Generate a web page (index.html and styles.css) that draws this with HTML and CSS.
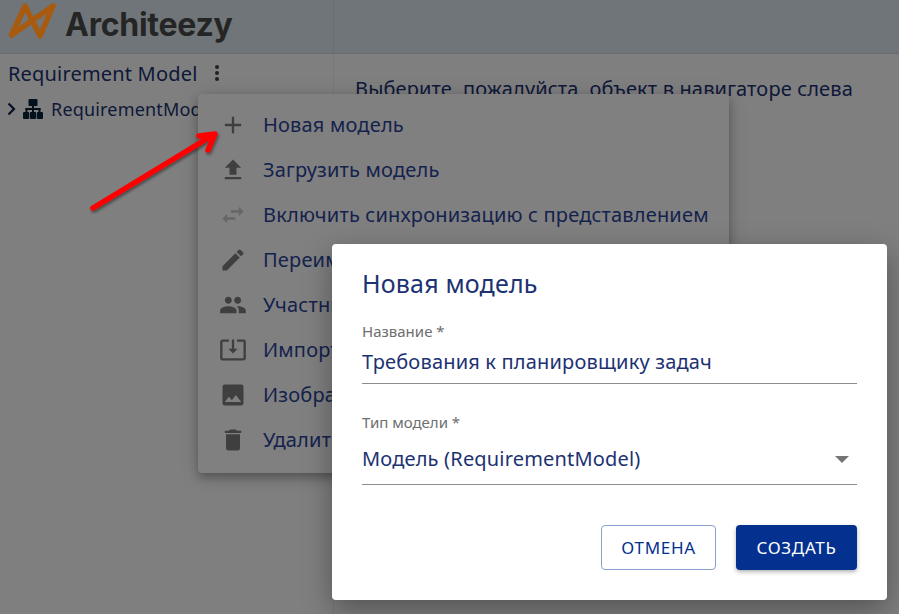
FILE: index.html
```html
<!DOCTYPE html>
<html lang="ru">
<head>
<meta charset="utf-8">
<title>Architeezy</title>
<link rel="stylesheet" href="styles.css">
</head>
<body>
<div class="app">
  <header class="topbar">
    <div class="brand">
      <svg class="logo" width="48" height="40" viewBox="0 0 48 40"><path d="M3.500 34 L17 5 L32 35 L45 5 Z" fill="none" stroke="#a85a0e" stroke-width="5.500" stroke-linejoin="round"/></svg>
      <span class="brand-name">Architeezy</span>
    </div>
    <div class="topbar-rest"></div>
  </header>
  <div class="content">
    <aside class="sidebar">
      <div class="sidebar-head">
        <span class="sidebar-title">Requirement Model</span>
        <svg class="icon-dots" width="6" height="18" viewBox="0 0 6 18"><circle cx="3" cy="3" r="2" fill="#424242"/><circle cx="3" cy="9" r="2" fill="#424242"/><circle cx="3" cy="15" r="2" fill="#424242"/></svg>
      </div>
      <div class="tree-row">
        <svg class="chev" width="10" height="14" viewBox="0 0 10 14"><path d="M1.500 1.500 L7 7 L1.500 12.500" fill="none" stroke="#0e1f4d" stroke-width="2.200"/></svg>
        <svg class="tree-icon" width="20" height="20" viewBox="0 0 20 20"><g fill="#06233a"><rect x="5.500" width="9" height="7" rx="1"/><rect x="9" y="7" width="2" height="6"/><rect x="2.500" y="9" width="15" height="2"/><rect x="2.500" y="9" width="2" height="4"/><rect x="15.500" y="9" width="2" height="4"/><rect y="13" width="6.200" height="7" rx="1"/><rect x="6.900" y="13" width="6.200" height="7" rx="1"/><rect x="13.800" y="13" width="6.200" height="7" rx="1"/></g></svg>
        <span class="tree-label">RequirementModel</span>
      </div>
    </aside>
    <main class="main">
      <p class="hint">Выберите, пожалуйста, объект в навигаторе слева</p>
    </main>
  </div>
</div>
<div class="overlay"></div>
<nav class="menu">
  <div class="menu-item"><svg class="mi" viewBox="0 0 24 24"><path d="M19 13h-6v6h-2v-6H5v-2h6V5h2v6h6v2z"/></svg><span>Новая модель</span></div>
  <div class="menu-item"><svg class="mi" viewBox="0 0 24 24"><path d="M9 16h6v-6h4l-7-7-7 7h4v6zm-4 2h14v2H5v-2z"/></svg><span>Загрузить модель</span></div>
  <div class="menu-item"><svg class="mi mi-dim" viewBox="0 0 24 24"><path d="M6.990 11L3 15l3.990 4v-3H14v-2H6.990v-3zM21 9l-3.990-4v3H10v2h7.010v3L21 9z"/></svg><span>Включить синхронизацию с представлением</span></div>
  <div class="menu-item"><svg class="mi" viewBox="0 0 24 24"><path d="M3 17.250V21h3.750L17.810 9.940l-3.750-3.750L3 17.250zM20.710 7.040a1 1 0 0 0 0-1.410l-2.340-2.340a1 1 0 0 0-1.410 0l-1.830 1.830 3.750 3.750 1.830-1.830z"/></svg><span>Переименовать</span></div>
  <div class="menu-item"><svg class="mi" viewBox="0 0 24 24"><path d="M16 11c1.660 0 2.990-1.340 2.990-3S17.660 5 16 5s-3 1.340-3 3 1.340 3 3 3zm-8 0c1.660 0 2.990-1.340 2.990-3S9.660 5 8 5 5 6.340 5 8s1.340 3 3 3zm0 2c-2.330 0-7 1.170-7 3.500V19h14v-2.500C15 14.170 10.330 13 8 13zm8 0c-.29 0-.62.020-.97.050 1.160.84 1.970 1.970 1.970 3.450V19h6v-2.500c0-2.330-4.670-3.500-7-3.500z"/></svg><span>Участники</span></div>
  <div class="menu-item"><svg class="mi" viewBox="0 0 24 24"><path d="M3 3h5.500v2H3v14h18V5h-5.500V3H21a2 2 0 0 1 2 2v14a2 2 0 0 1-2 2H3a2 2 0 0 1-2-2V5a2 2 0 0 1 2-2zm8 0h2v8h3l-4 4-4-4h3V3z"/></svg><span>Импорт</span></div>
  <div class="menu-item"><svg class="mi" viewBox="0 0 24 24"><path d="M21 19V5a2 2 0 0 0-2-2H5a2 2 0 0 0-2 2v14a2 2 0 0 0 2 2h14a2 2 0 0 0 2-2zM8.500 13.500l2.500 3.010L14.500 12l4.500 6H5l3.500-4.500z"/></svg><span>Изображение</span></div>
  <div class="menu-item"><svg class="mi" viewBox="0 0 24 24"><path d="M6 19a2 2 0 0 0 2 2h8a2 2 0 0 0 2-2V7H6v12zM19 4h-3.500l-1-1h-5l-1 1H5v2h14V4z"/></svg><span>Удалить</span></div>
</nav>
<section class="dialog">
  <h2 class="dialog-title">Новая модель</h2>
  <div class="field field-name">
    <label class="field-label">Название *</label>
    <div class="field-value">Требования к планировщику задач</div>
  </div>
  <div class="field field-type">
    <label class="field-label">Тип модели *</label>
    <div class="field-value field-select"><span>Модель (RequirementModel)</span><svg width="14" height="7" viewBox="0 0 14 7"><path d="M0 0h14L7 7z" fill="#757575"/></svg></div>
  </div>
  <div class="actions">
    <button class="btn btn-outline">ОТМЕНА</button>
    <button class="btn btn-primary">СОЗДАТЬ</button>
  </div>
</section>
<svg class="arrow" width="140" height="90" viewBox="0 0 140 90"><defs><filter id="s" x="-20%" y="-20%" width="140%" height="140%"><feDropShadow dx="1" dy="2" stdDeviation="1.500" flood-color="#000" flood-opacity=".45"/></filter></defs><g filter="url(#s)"><path d="M5 84 L125 11" fill="none" stroke="#ff0000" stroke-width="5.500" stroke-linecap="round"/><path d="M111 12 L127 10 L120 26" fill="none" stroke="#ff0000" stroke-width="5.500" stroke-linecap="round" stroke-linejoin="round"/></g></svg>
</body>
</html>
```
FILE: styles.css
```css
* { box-sizing: border-box; }
html, body { margin: 0; padding: 0; height: 100%; overflow: hidden; }
body { font-family: "Noto Sans", "Open Sans", sans-serif; color: #1c3272; background: #fff; position: relative; letter-spacing: .18px; }
.app { display: flex; flex-direction: column; height: 614px; }
.topbar { display: flex; height: 54px; background: #e0ebf3; border-bottom: 1px solid #d2d8dc; }
.brand { width: 334px; display: flex; align-items: center; padding-left: 8px; border-right: 1px solid #d8dfe4; }
.logo { margin-top: -11px; flex: none; position: relative; z-index: 2; }
.brand-name { font-family: "Inter", sans-serif; font-weight: 700; font-size: 32px; color: #4a4a4a; margin-left: 9px; margin-top: -5px; letter-spacing: -.25px; }
.topbar-rest { flex: 1; }
.content { display: flex; flex: 1; }
.sidebar { width: 334px; border-right: 1px solid #f0f0f0; padding: 7px 0 0 8px; }
.sidebar-head { display: flex; align-items: center; height: 24px; }
.sidebar-title { font-size: 20px; }
.icon-dots { margin-left: 17px; }
.tree-row { display: flex; align-items: center; margin-top: 12px; margin-left: -1px; height: 24px; white-space: nowrap; }
.tree-icon { margin-left: 6px; }
.tree-label { font-size: 18px; margin-left: 8px; }
.main { flex: 1; padding: 21px 0 0 21px; }
.hint { margin: 0; font-size: 20px; letter-spacing: .15px; }
.overlay { position: absolute; inset: 0; background: rgba(0,0,0,.5); }
.menu { position: absolute; left: 198px; top: 94px; width: 531px; height: 379px; padding: 8px 0; background: #808080; border-radius: 4px; box-shadow: 0 5px 10px rgba(0,0,0,.25), 0 2px 20px rgba(0,0,0,.15); }
.menu-item { display: flex; align-items: center; height: 45px; padding-left: 21px; font-size: 20px; color: #14224d; white-space: nowrap; }
.mi { width: 28px; height: 28px; fill: #3f3f3f; flex: none; margin-right: 16px; }
.mi-dim { fill: #666; }
.dialog { position: absolute; left: 332px; top: 244px; width: 555px; height: 356px; background: #fff; border-radius: 4px; padding: 23px 30px; box-shadow: 0 10px 30px rgba(0,0,0,.35); }
.dialog-title { margin: 0; font-size: 25px; font-weight: 400; line-height: 32px; color: #1c3272; }
.field { border-bottom: 1px solid #8c8c8c; }
.field-name { margin-top: 22px; height: 63px; }
.field-type { margin-top: 28px; height: 73px; }
.field-label { display: block; font-size: 15px; line-height: 20px; color: #6e6e6e; letter-spacing: 0; }
.field-value { font-size: 20px; line-height: 28px; margin-top: 7px; color: #1c3272; }
.field-select { display: flex; justify-content: space-between; align-items: center; margin-top: 13px; padding-right: 8px; }
.actions { display: flex; justify-content: flex-end; gap: 20px; margin-top: 40px; }
.btn { font-family: inherit; font-size: 17px; height: 45px; border-radius: 4px; letter-spacing: .7px; padding-bottom: 2px; }
.btn-outline { width: 115px; background: #fff; color: #04318f; border: 1px solid #8ba0cf; }
.btn-primary { width: 121px; background: #04318f; color: #fff; border: 0; box-shadow: 0 2px 4px rgba(0,0,0,.3); }
.arrow { position: absolute; left: 88px; top: 124px; }
```
